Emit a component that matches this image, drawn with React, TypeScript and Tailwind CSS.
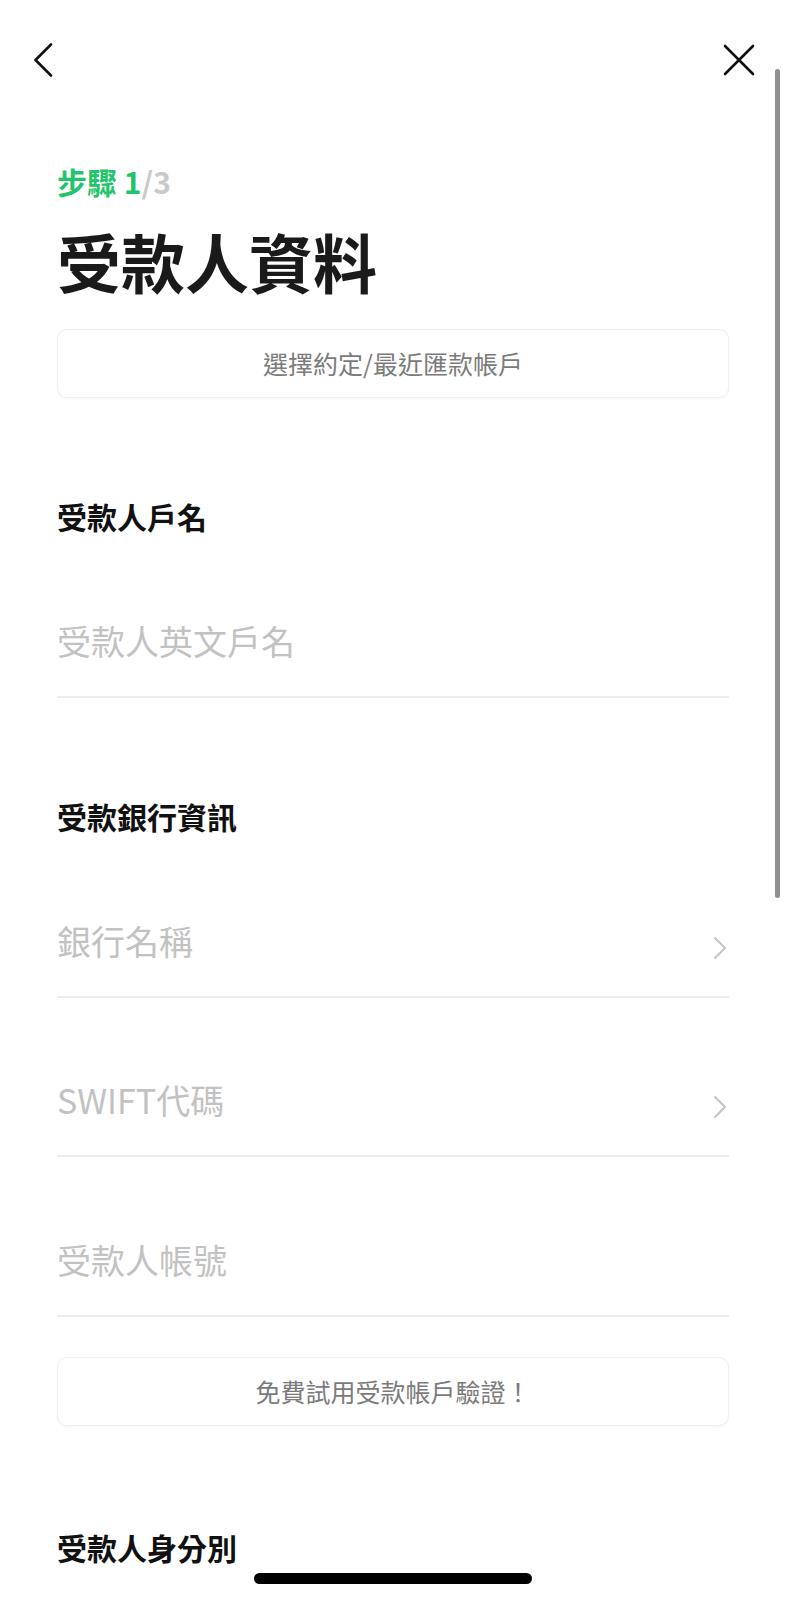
import React from 'react';

const font = { fontFamily: '"Noto Sans CJK TC", "Noto Sans", sans-serif' };

const ChevronRight = () => (
  <svg width="14" height="24" viewBox="0 0 14 24" fill="none" className="shrink-0">
    <path d="M2 2 L12 12 L2 22" stroke="#c4c4c4" strokeWidth="2" strokeLinecap="round" strokeLinejoin="round" />
  </svg>
);

interface FieldProps {
  placeholder: string;
  arrow?: boolean;
  top: string;
}

const Field: React.FC<FieldProps> = ({ placeholder, arrow, top }) => (
  <div className={`flex items-center justify-between border-b-2 border-[#ececec] pb-[33px] ${top}`}>
    <span className="text-[34px] leading-[44px] text-[#c2c2c2]">{placeholder}</span>
    {arrow && (
      <span className="mt-[14px] mr-[2px]">
        <ChevronRight />
      </span>
    )}
  </div>
);

const OutlineButton: React.FC<{ label: string; top: string }> = ({ label, top }) => (
  <button
    className={`flex h-[69px] w-full items-center justify-center rounded-[10px] border border-[#efefef] bg-white text-[25px] text-[#7b7b7b] shadow-[0_1px_3px_rgba(0,0,0,0.04)] ${top}`}
  >
    {label}
  </button>
);

const SectionLabel: React.FC<{ text: string; top: string }> = ({ text, top }) => (
  <h2 className={`text-[30px] leading-[40px] font-bold text-[#111111] ${top}`}>{text}</h2>
);

export default function App() {
  return (
    <div className="relative h-[1600px] w-full overflow-hidden bg-white" style={font}>
      {/* Header */}
      <div className="flex items-start justify-between pt-[43px] pl-[33px] pr-[30px]">
        <button>
          <svg width="20" height="34" viewBox="0 0 20 34" fill="none">
            <path d="M18 1.5 L2.5 17 L18 32.5" stroke="#111" strokeWidth="2.6" strokeLinecap="round" strokeLinejoin="round" />
          </svg>
        </button>
        <button className="mt-[1px]">
          <svg width="32" height="32" viewBox="0 0 32 32" fill="none">
            <path d="M2 2 L30 30 M30 2 L2 30" stroke="#111" strokeWidth="2.6" strokeLinecap="round" />
          </svg>
        </button>
      </div>

      {/* Content */}
      <div className="flex flex-col pl-[57px] pr-[56px]">
        <p className="mt-[83px] text-[30px] leading-[42px] font-bold">
          <span className="text-[#1fc46b]">步驟 1</span>
          <span className="text-[#cacaca]">/3</span>
        </p>
        <h1 className="mt-[20px] text-[64px] leading-[77px] font-bold text-[#1a1a1a]">受款人資料</h1>

        <OutlineButton label="選擇約定/最近匯款帳戶" top="mt-[30px]" />

        <SectionLabel text="受款人戶名" top="mt-[98px]" />
        <Field placeholder="受款人英文戶名" top="mt-[83px]" />

        <SectionLabel text="受款銀行資訊" top="mt-[98px]" />
        <Field placeholder="銀行名稱" arrow top="mt-[83px]" />
        <Field placeholder="SWIFT代碼" arrow top="mt-[80px]" />
        <Field placeholder="受款人帳號" top="mt-[81px]" />

        <OutlineButton label="免費試用受款帳戶驗證！" top="mt-[40px]" />

        <SectionLabel text="受款人身分別" top="mt-[101px]" />
      </div>

      {/* Scrollbar */}
      <div className="absolute right-[5px] top-[69px] h-[829px] w-[5px] rounded-full bg-[#8e8e8e]" />

      {/* Home indicator */}
      <div className="absolute bottom-[16px] left-[254px] h-[11px] w-[278px] rounded-full bg-black" />
    </div>
  );
}
